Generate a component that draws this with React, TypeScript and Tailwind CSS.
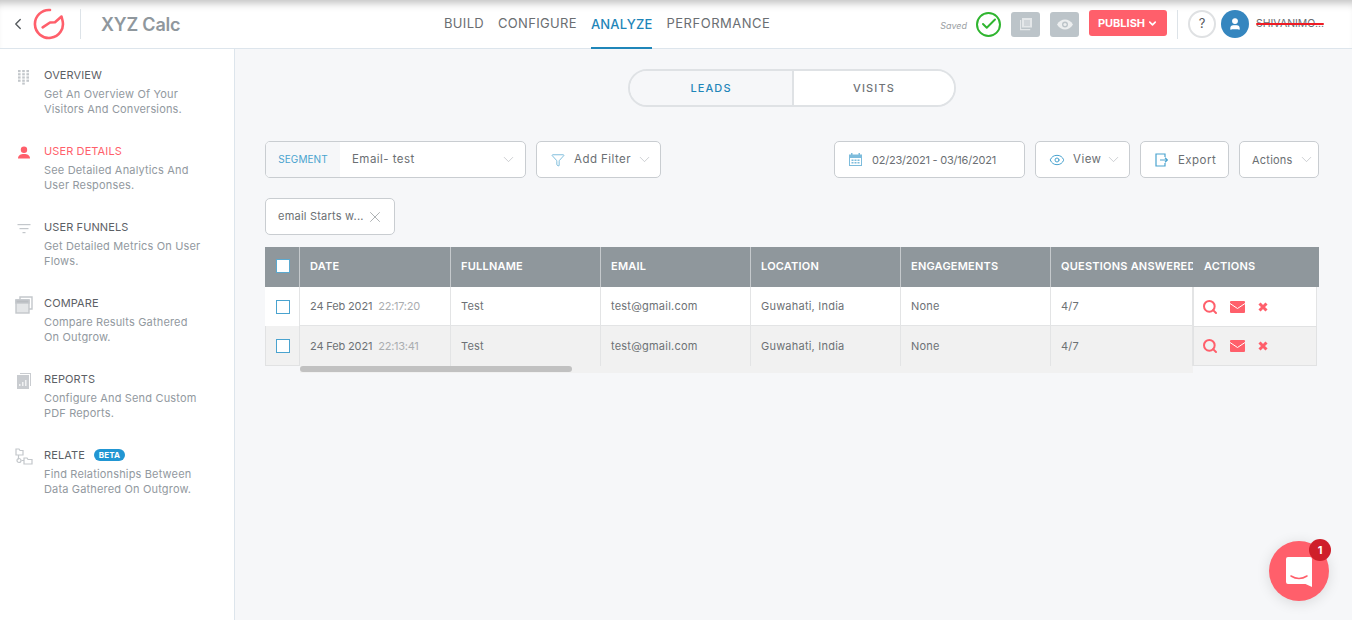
import React from 'react';
import { ChevronLeft, ChevronDown, Check, Eye, Funnel, X, Search, User } from 'lucide-react';

const sideItems = [
  { title: 'OVERVIEW', desc: ['Get An Overview Of Your', 'Visitors And Conversions.'], icon: 'grid' },
  { title: 'USER DETAILS', desc: ['See Detailed Analytics And', 'User Responses.'], icon: 'user', active: true },
  { title: 'USER FUNNELS', desc: ['Get Detailed Metrics On User', 'Flows.'], icon: 'funnel' },
  { title: 'COMPARE', desc: ['Compare Results Gathered', 'On Outgrow.'], icon: 'compare' },
  { title: 'REPORTS', desc: ['Configure And Send Custom', 'PDF Reports.'], icon: 'reports' },
  { title: 'RELATE', desc: ['Find Relationships Between', 'Data Gathered On Outgrow.'], icon: 'relate', beta: true },
];

const SideIcon = ({ name }: { name: string }) => {
  if (name === 'grid') {
    return (
      <svg width="14" height="16" viewBox="0 0 14 16" fill="#c3c7cb">
        {[0, 1, 2, 3].map((r) =>
          [0, 1, 2].map((c) => <rect key={`${r}-${c}`} x={1 + c * 4.2} y={1 + r * 3.2} width="2.6" height="2.2" />)
        )}
        <rect x="5.2" y="13.6" width="2.6" height="2" />
      </svg>
    );
  }
  if (name === 'user') {
    return (
      <svg width="14" height="14" viewBox="0 0 14 14" fill="#ff5f6b">
        <circle cx="7" cy="3.8" r="3.2" />
        <path d="M1 12.4c0-3 2.6-4.4 6-4.4s6 1.400 6 4.400z" />
      </svg>
    );
  }
  if (name === 'funnel') {
    return (
      <svg width="14" height="12" viewBox="0 0 14 12" fill="#c3c7cb">
        <rect x="0.500" y="1" width="13" height="1.200" />
        <rect x="2.500" y="5" width="9" height="1.200" />
        <rect x="5.500" y="9" width="3" height="1.200" />
      </svg>
    );
  }
  if (name === 'compare') {
    return (
      <svg width="18" height="18" viewBox="0 0 18 18" fill="none" stroke="#c3c7cb" strokeWidth="1.400">
        <path d="M5 3.500V1h12v12h-3" />
        <rect x="1" y="4" width="13" height="13" fill="#e4e6e8" />
        <rect x="1" y="4" width="13" height="3" fill="#b9bdc1" />
      </svg>
    );
  }
  if (name === 'reports') {
    return (
      <svg width="14" height="16" viewBox="0 0 14 16" fill="#c9ccd0">
        <path d="M3 0h11v13h-1V1H3z" />
        <rect x="0" y="2" width="12" height="14" />
        <path d="M2 13v-2h1.500v2zM5 13V9h1.500v4zM8 13V7h1.500v6z" fill="#f1f2f3" />
      </svg>
    );
  }
  return (
    <svg width="18" height="18" viewBox="0 0 18 18" fill="none" stroke="#c3c7cb" strokeWidth="1.200">
      <path d="M1 1h3l1 1.500h3V7H1zM3.500 7v4.500M6.500 12.500H9V10h3l1 1.500h4V16H9v-3.500" />
      <circle cx="4" cy="12.500" r="2" />
    </svg>
  );
};

const Logo = () => (
  <svg width="32" height="32" viewBox="0 0 32 32" fill="none" stroke="#ff5f6b" strokeWidth="2.600" strokeLinecap="round" strokeLinejoin="round">
    <path d="M17 2A14 14 0 1 0 29.500 12.500L28.500 8.500L22 14.300L17 14.500L9.700 19.300" />
  </svg>
);

const columns = [
  { label: 'DATE', w: 'w-[151px]', cells: ['24 Feb 2021', '24 Feb 2021'], extra: ['22:17:20', '22:13:41'] },
  { label: 'FULLNAME', w: 'w-[150px]', cells: ['Test', 'Test'] },
  { label: 'EMAIL', w: 'w-[150px]', cells: ['test@gmail.com', 'test@gmail.com'] },
  { label: 'LOCATION', w: 'w-[150px]', cells: ['Guwahati, India', 'Guwahati, India'] },
  { label: 'ENGAGEMENTS', w: 'w-[150px]', cells: ['None', 'None'] },
  { label: 'QUESTIONS ANSWERED', w: 'w-[142px]', cells: ['4/7', '4/7'], open: true },
];

const Chevron = () => <ChevronDown className="w-[17px] h-[17px] text-[#b9bdc1]" strokeWidth={1} />;

const btn = 'h-[37px] bg-white border border-[#c9cdd1] rounded-[5px] flex items-center text-[11.5px] text-[#6b6f73] tracking-[0.04em]';

const RowActions = () => (
  <div className="flex items-center text-[#ff5f6b] -ml-[2px]">
    <Search className="w-[16px] h-[16px]" strokeWidth={3} />
    <svg className="ml-[12px]" width="15" height="12" viewBox="0 0 15 12">
      <rect width="15" height="12" rx="1" fill="#ff5f6b" />
      <path d="M0 2.500 7.500 7.500 15 2.500" fill="none" stroke="#ffffff" strokeWidth="1" />
    </svg>
    <svg className="ml-[13px]" width="10" height="10" viewBox="0 0 10 10" fill="none" stroke="#ff5f6b" strokeWidth="3">
      <path d="M1.500 1.500 8.500 8.500M8.500 1.500 1.500 8.500" />
    </svg>
  </div>
);

export default function App() {
  return (
    <div className="w-[1352px] h-[620px] overflow-hidden bg-[#f6f7f9] flex flex-col relative font-['Inter',sans-serif]">
      <header className="h-[49px] shrink-0 bg-white border-b border-[#dde5ec] flex items-center relative shadow-[inset_0_9px_8px_-6px_rgba(0,0,0,0.26)]">
        <div className="w-[444px] flex items-center shrink-0">
          <ChevronLeft className="w-[18px] h-[18px] ml-[9px] text-[#555a5e]" strokeWidth={1.800} />
          <div className="ml-[6px]"><Logo /></div>
          <div className="ml-[15px] w-px h-[30px] bg-[#dde3e8]" />
          <span className="ml-[20px] text-[18px] font-semibold text-[#8f979d] tracking-[-0.01em]">XYZ Calc</span>
        </div>
        <nav className="flex h-full items-stretch gap-[14px] text-[13px] text-[#6a6e72] tracking-[0.025em]">
          <span className="flex items-center">BUILD</span>
          <span className="flex items-center">CONFIGURE</span>
          <span className="flex items-center text-[#1f86b9] font-medium border-b-2 border-[#1f86b9] pt-[2px] -mb-px tracking-[0.015em]">ANALYZE</span>
          <span className="flex items-center tracking-[0.04em]">PERFORMANCE</span>
        </nav>
        <div className="ml-auto flex items-center pr-[24px]">
          <span className="text-[9px] italic text-[#9a9ea2] mt-[3px]">Saved</span>
          <span className="ml-[9px] w-[25px] h-[25px] rounded-full border-2 border-[#2fb52f] flex items-center justify-center">
            <Check className="w-[18px] h-[18px] text-[#2fb52f]" strokeWidth={2.600} />
          </span>
          <span className="ml-[10px] w-[29px] h-[25px] rounded-[3px] bg-[#bcc4c9] flex items-center justify-center">
            <svg width="14" height="14" viewBox="0 0 14 14" fill="#e4e7e9">
              <path d="M3 1h10v9.500H3zM1 3h1.200v9h9v1.200H1z" />
              <path d="M5 3.500h6v1H5zM5 5.500h6v1H5zM5 7.500h6v1H5z" fill="#bcc4c9" />
            </svg>
          </span>
          <span className="ml-[10px] w-[29px] h-[25px] rounded-[3px] bg-[#bcc4c9] flex items-center justify-center">
            <svg width="16" height="11" viewBox="0 0 16 11">
              <path d="M0 5.500C2 2 5 .5 8 .5s6 1.500 8 5c-2 3.500-5 5-8 5s-6-1.500-8-5z" fill="#eceeef" />
              <circle cx="8" cy="5.500" r="3" fill="#bcc4c9" />
              <circle cx="8" cy="5.500" r="1.600" fill="#eceeef" />
            </svg>
          </span>
          <span className="ml-[10px] w-[78px] h-[26px] -mt-[2px] rounded-[3px] bg-[#ff5f6b] text-white text-[11px] font-bold flex items-center justify-center">
            PUBLISH
            <ChevronDown className="w-[11px] h-[11px] ml-[2px]" strokeWidth={3.500} />
          </span>
          <span className="ml-[10px] w-px h-[29px] bg-[#dde3e8]" />
          <span className="ml-[10px] w-[28px] h-[28px] rounded-full border-2 border-[#dfe1e3] flex items-center justify-center text-[13px] text-[#55595d]">?</span>
          <span className="ml-[5px] w-[28px] h-[28px] rounded-full bg-[#3586bf] flex items-center justify-center">
            <User className="w-[14px] h-[14px] text-white" fill="#ffffff" strokeWidth={2} />
          </span>
          <span className="ml-[7px] relative text-[10.500px] text-[#6a6e72] leading-none w-[72px] whitespace-nowrap">
            SHIVANIMO...
            <span className="absolute left-0 top-[4px] w-[68px] h-[2px] bg-[#ee1c25] rounded" />
          </span>
        </div>
      </header>

      <div className="flex flex-1 min-h-0">
        <aside className="w-[235px] shrink-0 bg-white border-r border-[#dde5ec] pt-[19px]">
          {sideItems.map((item) => (
            <div key={item.title} className="h-[76px] flex">
              <div className="w-[44px] shrink-0 flex justify-center pl-[3px]">
                <div className="w-[20px] h-[18px] flex items-center justify-center"><SideIcon name={item.icon} /></div>
              </div>
              <div>
                <div className={`h-[14px] flex items-center text-[11px] tracking-[0.01em] ${item.active ? 'text-[#ff5f6b]' : 'text-[#5c6065]'}`}>
                  {item.title}
                  {item.beta && (
                    <span className="ml-[9px] h-[12px] w-[31px] rounded-full bg-[#2196d3] text-white text-[8px] font-bold flex items-center justify-center">BETA</span>
                  )}
                </div>
                <div className="mt-[5px] text-[11px] leading-[15px] text-[#9299a0] tracking-[0.015em] whitespace-nowrap">
                  {item.desc.map((d) => <div key={d}>{d}</div>)}
                </div>
              </div>
            </div>
          ))}
        </aside>

        <main className="flex-1 min-w-0 pl-[30px] pr-[33px] relative">
          <div className="flex justify-center pt-[20px]">
            <div className="w-[328px] h-[38px] flex rounded-full border-2 border-[#dfe2e5] overflow-hidden text-[11px] tracking-[0.1em] font-medium">
              <span className="w-[164px] border-r-2 border-[#dfe2e5] flex items-center justify-center text-[#1f86b9] bg-[#f6f7f9]">LEADS</span>
              <span className="flex-1 bg-white flex items-center justify-center text-[#6f7377]">VISITS</span>
            </div>
          </div>

          <div className="mt-[34px] flex items-center">
            <div className={`${btn} w-[261px] overflow-hidden`}>
              <span className="w-[74px] h-full bg-[#f6f7f9] flex items-center justify-center text-[10px] text-[#4aa3cf] tracking-[0.01em]">SEGMENT</span>
              <span className="ml-[12px] mt-[1px]">Email- test</span>
              <span className="ml-auto mr-[8px]"><Chevron /></span>
            </div>
            <div className={`${btn} w-[125px] ml-[10px]`}>
              <Funnel className="w-[14px] h-[14px] ml-[14px] text-[#4aa3cf]" strokeWidth={1.200} />
              <span className="ml-[9px] mt-[1px]">Add Filter</span>
              <span className="ml-auto mr-[7px]"><Chevron /></span>
            </div>
            <div className={`${btn} w-[191px] ml-auto`}>
              <svg className="ml-[14px]" width="13" height="13" viewBox="0 0 13 13" fill="#7dbcdc">
                <rect x="2" y="0" width="1.500" height="2.500" />
                <rect x="9.500" y="0" width="1.500" height="2.500" />
                <path d="M0 1.500h13V13H0zM1 5v7h11V5z" fillRule="evenodd" />
                <path d="M2.500 6.500h2v1.500h-2zM5.500 6.500h2v1.500h-2zM8.500 6.500h2v1.500h-2zM2.500 9h2v1.500h-2zM5.500 9h2v1.500h-2zM8.500 9h2v1.500h-2z" />
              </svg>
              <span className="ml-[10px] mt-[1px] text-[11px] tracking-[-0.02em]">02/23/2021 - 03/16/2021</span>
            </div>
            <div className={`${btn} w-[95px] ml-[10px]`}>
              <Eye className="w-[16px] h-[16px] ml-[13px] text-[#4aa3cf]" strokeWidth={1.500} />
              <span className="ml-[8px]">View</span>
              <span className="ml-auto mr-[7px]"><Chevron /></span>
            </div>
            <div className={`${btn} w-[89px] ml-[10px]`}>
              <svg className="ml-[14px]" width="13" height="14" viewBox="0 0 13 14" fill="none" stroke="#4aa3cf" strokeWidth="1.200">
                <path d="M10 4V1H1v12h9v-3M5 7h7.500M10 4.800 12.500 7 10 9.200" />
              </svg>
              <span className="ml-[10px] mt-[2px]">Export</span>
            </div>
            <div className={`${btn} w-[80px] ml-[10px]`}>
              <span className="ml-[12px] text-[11px] mt-[1px] tracking-[0.02em]">Actions</span>
              <span className="ml-auto mr-[3px]"><Chevron /></span>
            </div>
          </div>

          <div className={`${btn} w-[130px] h-[34px] mt-[20px]`}>
            <span className="ml-[12px] text-[11px] tracking-[0.02em]">email Starts w...</span>
            <X className="w-[18px] h-[18px] ml-auto mr-[10px] text-[#a6aaad]" strokeWidth={1.200} />
          </div>

          <div className="mt-[12px] flex items-start text-[11px] text-[#6d7175] tracking-[0.02em]">
            <div className="w-[35px] shrink-0">
              <div className="h-[40px] bg-[#8f979c] border-r border-[#c5c9cc] flex items-center pl-[11px] pb-[2px]">
                <span className="w-[14px] h-[14px] bg-white border border-[#5aa9d0]" />
              </div>
              <div className="h-[39px] bg-white border-r border-[#e3e4e5] flex items-center pl-[11px]">
                <span className="w-[14px] h-[14px] border border-[#4aa3cf]" />
              </div>
              <div className="h-[40px] bg-[#f1f1f1] border-x border-b border-[#e1e2e3] flex items-center pl-[10px]">
                <span className="w-[14px] h-[14px] bg-white border border-[#4aa3cf]" />
              </div>
            </div>
            <div className="w-[893px] shrink-0">
              <div className="flex">
                {columns.map((col) => (
                  <div key={col.label} className={`${col.w} shrink-0`}>
                    <div className={`h-[40px] bg-[#8f979c] ${col.open ? '' : 'border-r border-[#c5c9cc]'} flex items-center pl-[10px] pb-[2px] font-semibold text-white whitespace-nowrap overflow-hidden tracking-[0.02em]`}>{col.label}</div>
                    {col.cells.map((text, i) => (
                      <div key={i} className={`${i === 0 ? 'h-[39px] bg-white border-b border-[#e3e4e5]' : 'h-[40px] bg-[#f1f1f1]'} border-r border-[#e3e4e5] flex items-center pl-[10px] whitespace-nowrap`}>
                        <span className={col.extra ? 'tracking-[-0.013em]' : ''}>{text}</span>
                        {col.extra && <span className="ml-[6px] text-[#aaadb0] tracking-[-0.025em]">{col.extra[i]}</span>}
                      </div>
                    ))}
                  </div>
                ))}
              </div>
              <div className="h-[7px] bg-[#f1f1f1]">
                <div className="w-[272px] h-[6px] rounded-full bg-[#c1c1c1]" />
              </div>
            </div>
            <div className="flex-1">
              <div className="h-[40px] bg-[#8f979c] flex items-center pl-[11px] pb-[2px] font-semibold text-white tracking-[0.02em]">ACTIONS</div>
              <div className="h-[39px] mr-[2px] bg-white border-x border-[#e3e4e5] flex items-center pl-[10px]"><RowActions /></div>
              <div className="h-[40px] mr-[2px] bg-[#f1f1f1] border border-[#e1e2e3] flex items-center pl-[10px]"><RowActions /></div>
            </div>
          </div>
        </main>
      </div>

      <div className="absolute left-[1269px] top-[541px] w-[60px] h-[60px] rounded-full bg-[#ff5f6b] shadow-[0_2px_14px_rgba(0,0,0,0.12)] flex items-center justify-center">
        <svg width="28" height="32" viewBox="0 0 28 32" className="mt-[2px]">
          <path d="M3 1h22a2 2 0 0 1 2 2v28l-6.500-3H3a2 2 0 0 1-2-2V3a2 2 0 0 1 2-2z" fill="#ffffff" />
          <path d="M6 20c5 3 11 3 16 0" fill="none" stroke="#ff5f6b" strokeWidth="1.500" strokeLinecap="round" />
        </svg>
        <span className="absolute -top-[2px] -right-[2px] w-[22px] h-[22px] rounded-full bg-[#cf1f2a] text-white text-[11px] font-bold flex items-center justify-center">1</span>
      </div>
    </div>
  );
}
